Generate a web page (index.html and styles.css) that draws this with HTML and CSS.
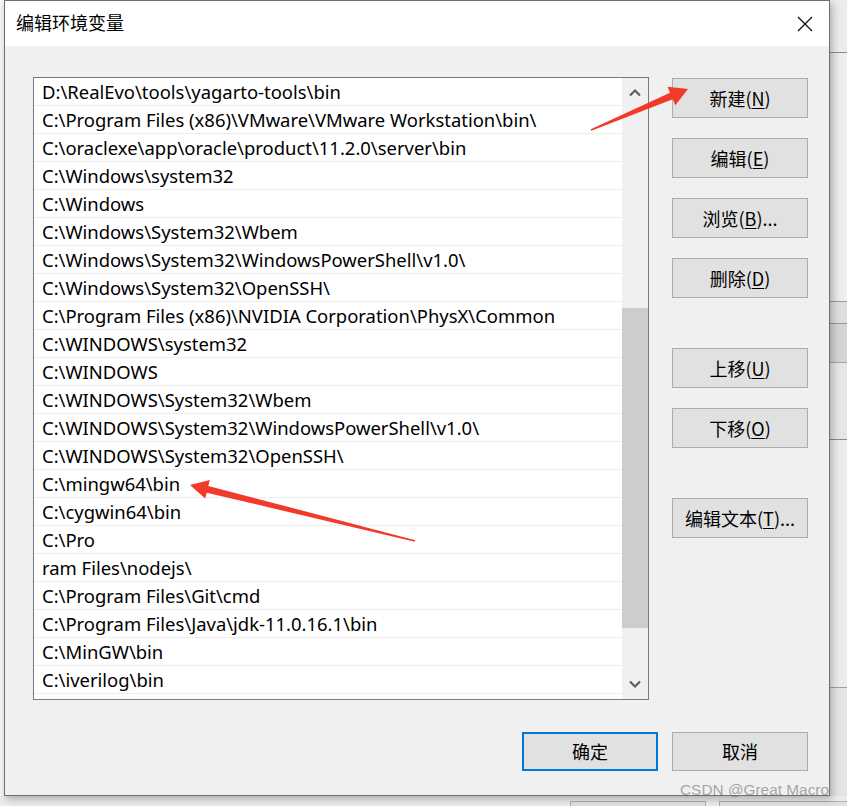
FILE: index.html
```html
<!DOCTYPE html>
<html lang="zh-CN">
<head>
<meta charset="utf-8">
<title>编辑环境变量</title>
<link rel="stylesheet" href="styles.css">
</head>
<body>
<div class="backdrop">
  <div class="bd-left"></div>
  <div class="bd-right">
    <div class="bd-seg bd-a"></div>
    <div class="bd-seg bd-b"></div>
    <div class="bd-seg bd-c"></div>
    <div class="bd-seg bd-d"></div>
    <div class="bd-seg bd-e"></div>
    <div class="bd-seg bd-f"></div>
    <div class="bd-seg bd-g"></div>
  </div>
  <div class="bd-bottom">
    <div class="bd-btn bd-btn1"></div>
    <div class="bd-btn bd-btn2"></div>
  </div>
</div>

<div class="dialog">
  <div class="titlebar">
    <span class="title">编辑环境变量</span>
    <svg class="close" width="16" height="16" viewBox="0 0 16 16"><path d="M1 1 L15 15 M15 1 L1 15" stroke="#111" stroke-width="1.3" fill="none"/></svg>
  </div>
  <div class="content">
    <div class="listbox">
      <div class="rows">
        <div class="row">D:\RealEvo\tools\yagarto-tools\bin</div>
        <div class="row">C:\Program Files (x86)\VMware\VMware Workstation\bin\</div>
        <div class="row">C:\oraclexe\app\oracle\product\11.2.0\server\bin</div>
        <div class="row">C:\Windows\system32</div>
        <div class="row">C:\Windows</div>
        <div class="row">C:\Windows\System32\Wbem</div>
        <div class="row">C:\Windows\System32\WindowsPowerShell\v1.0\</div>
        <div class="row">C:\Windows\System32\OpenSSH\</div>
        <div class="row">C:\Program Files (x86)\NVIDIA Corporation\PhysX\Common</div>
        <div class="row">C:\WINDOWS\system32</div>
        <div class="row">C:\WINDOWS</div>
        <div class="row">C:\WINDOWS\System32\Wbem</div>
        <div class="row">C:\WINDOWS\System32\WindowsPowerShell\v1.0\</div>
        <div class="row">C:\WINDOWS\System32\OpenSSH\</div>
        <div class="row">C:\mingw64\bin</div>
        <div class="row">C:\cygwin64\bin</div>
        <div class="row">C:\Pro</div>
        <div class="row">ram Files\nodejs\</div>
        <div class="row">C:\Program Files\Git\cmd</div>
        <div class="row">C:\Program Files\Java\jdk-11.0.16.1\bin</div>
        <div class="row">C:\MinGW\bin</div>
        <div class="row">C:\iverilog\bin</div>
      </div>
      <div class="scrollbar">
        <div class="sb-btn">
          <svg width="12" height="8" viewBox="0 0 12 8"><path d="M1 6.5 L6 1.5 L11 6.5" stroke="#606060" stroke-width="2.2" fill="none"/></svg>
        </div>
        <div class="sb-track">
          <div class="sb-thumb"></div>
        </div>
        <div class="sb-btn">
          <svg width="12" height="8" viewBox="0 0 12 8"><path d="M1 1.5 L6 6.5 L11 1.5" stroke="#606060" stroke-width="2.2" fill="none"/></svg>
        </div>
      </div>
    </div>
    <div class="side">
      <button class="btn">新建(<u>N</u>)</button>
      <button class="btn">编辑(<u>E</u>)</button>
      <button class="btn">浏览(<u>B</u>)...</button>
      <button class="btn">删除(<u>D</u>)</button>
      <button class="btn btn-group">上移(<u>U</u>)</button>
      <button class="btn">下移(<u>O</u>)</button>
      <button class="btn btn-group">编辑文本(<u>T</u>)...</button>
    </div>
    <div class="footer">
      <button class="btn btn-default">确定</button>
      <button class="btn">取消</button>
    </div>
  </div>
</div>

<div class="watermark">CSDN @Great Macro</div>

<svg class="annot" width="847" height="806" viewBox="0 0 847 806">
  <polygon fill="#f2392a" points="688,89 675.3,105.2 672.8,99.2 591.3,130.7 590.7,129.3 670.0,92.8 667.5,86.8"/>
  <polygon fill="#f2392a" points="190,485 209.8,480.1 208.3,485.9 415.2,540.2 414.8,541.8 206.7,492.7 205.2,498.5"/>
</svg>
</body>
</html>
```

FILE: styles.css
```css
html, body {
  margin: 0;
  padding: 0;
}
body {
  width: 847px;
  height: 806px;
  overflow: hidden;
  position: relative;
  background: #e9e9e9;
  font-family: "Noto Sans", "Noto Sans CJK SC", sans-serif;
}

/* underlying window */
.backdrop {
  position: absolute;
  left: 0;
  top: 0;
  width: 847px;
  height: 806px;
}
.bd-left {
  position: absolute;
  left: 0;
  top: 0;
  width: 5px;
  height: 806px;
  background: #f7f7f7;
}
.bd-right {
  position: absolute;
  left: 830px;
  top: 0;
  width: 17px;
  height: 806px;
  display: flex;
  flex-direction: column;
  background: #eaeaea;
}
.bd-seg { box-sizing: border-box; }
.bd-a { height: 53px; background: #ececec; border-bottom: 1px solid #8a8a8a; }
.bd-b { height: 249px; background: linear-gradient(to right, #e4e4e4, #f1f1f1); border-bottom: 1px solid #9a9a9a; }
.bd-c { height: 22px; background: #dedede; border-bottom: 1px solid #9a9a9a; }
.bd-d { height: 39px; background: #d4d4d4; border-bottom: 1px solid #a5a5a5; }
.bd-e { height: 77px; background: #e6e6e6; border-bottom: 1px solid #8a8a8a; }
.bd-f { height: 248px; background: #ececec; border-bottom: 1px solid #a0a0a0; }
.bd-g { height: 118px; background: #e4e4e4; }
.bd-bottom {
  position: absolute;
  left: 0;
  top: 796px;
  width: 847px;
  height: 10px;
  background: #ececec;
}
.bd-btn {
  position: absolute;
  top: 5px;
  height: 10px;
  background: #e1e1e1;
  border: 1px solid #b0b0b0;
}
.bd-btn1 { left: 570px; width: 134px; }
.bd-btn2 { left: 719px; width: 140px; }

/* dialog window */
.dialog {
  position: absolute;
  left: 4px;
  top: 0;
  width: 826px;
  height: 796px;
  box-sizing: border-box;
  border: 1px solid #6f6f6f;
  background: #f0f0f0;
  box-shadow: 2px 3px 8px rgba(0, 0, 0, 0.28);
  display: flex;
  flex-direction: column;
}
.titlebar {
  height: 45px;
  flex: none;
  background: #ffffff;
  display: flex;
  align-items: center;
  justify-content: space-between;
  padding: 0 16px 0 11px;
}
.title {
  font-family: "Noto Sans CJK SC", sans-serif;
  font-size: 18px;
  color: #000;
  line-height: 1;
  padding-bottom: 4px;
}
.close { display: block; }

.content {
  flex: 1;
  display: grid;
  grid-template-columns: 616px 136px;
  grid-template-rows: 623px 39px;
  column-gap: 23px;
  row-gap: 32px;
  padding: 31px 21px 24px 28px;
}

.listbox {
  box-sizing: border-box;
  border: 1px solid #7a7a7a;
  background: #ffffff;
  display: flex;
}
.rows {
  flex: 1;
  display: flex;
  flex-direction: column;
}
.row {
  box-sizing: border-box;
  height: 28px;
  border-bottom: 1px solid #ededed;
  padding-left: 8px;
  font-size: 18.45px;
  line-height: 27px;
  color: #000;
  white-space: nowrap;
  overflow: hidden;
}
.scrollbar {
  width: 26px;
  flex: none;
  background: #f0f0f0;
  display: flex;
  flex-direction: column;
}
.sb-btn {
  height: 30px;
  flex: none;
  display: flex;
  align-items: center;
  justify-content: center;
}
.sb-btn svg { display: block; }
.sb-track {
  flex: 1;
  padding-top: 200px;
}
.sb-thumb {
  height: 320px;
  background: #cdcdcd;
}

.side {
  display: flex;
  flex-direction: column;
  gap: 20px;
  padding-top: 1px;
}
.btn {
  box-sizing: border-box;
  width: 136px;
  height: 40px;
  flex: none;
  background: #e1e1e1;
  border: 1px solid #adadad;
  border-radius: 0;
  margin: 0;
  padding: 0 0 1px 0;
  font-family: "Noto Sans CJK SC", sans-serif;
  font-size: 18px;
  color: #000;
  line-height: 1;
}
.btn u { text-underline-offset: 2px; }
.btn-group { margin-top: 30px; }

.footer {
  grid-column: 1 / 3;
  display: flex;
  justify-content: flex-end;
  gap: 14px;
}
.footer .btn { height: 39px; }
.btn-default {
  border: 2px solid #0078d7;
}

.watermark {
  position: absolute;
  left: 680px;
  top: 781px;
  font-family: "Liberation Sans", Arial, sans-serif;
  font-size: 15.4px;
  color: rgba(120, 120, 120, 0.65);
  white-space: nowrap;
}

.annot {
  position: absolute;
  left: 0;
  top: 0;
  pointer-events: none;
}
```
